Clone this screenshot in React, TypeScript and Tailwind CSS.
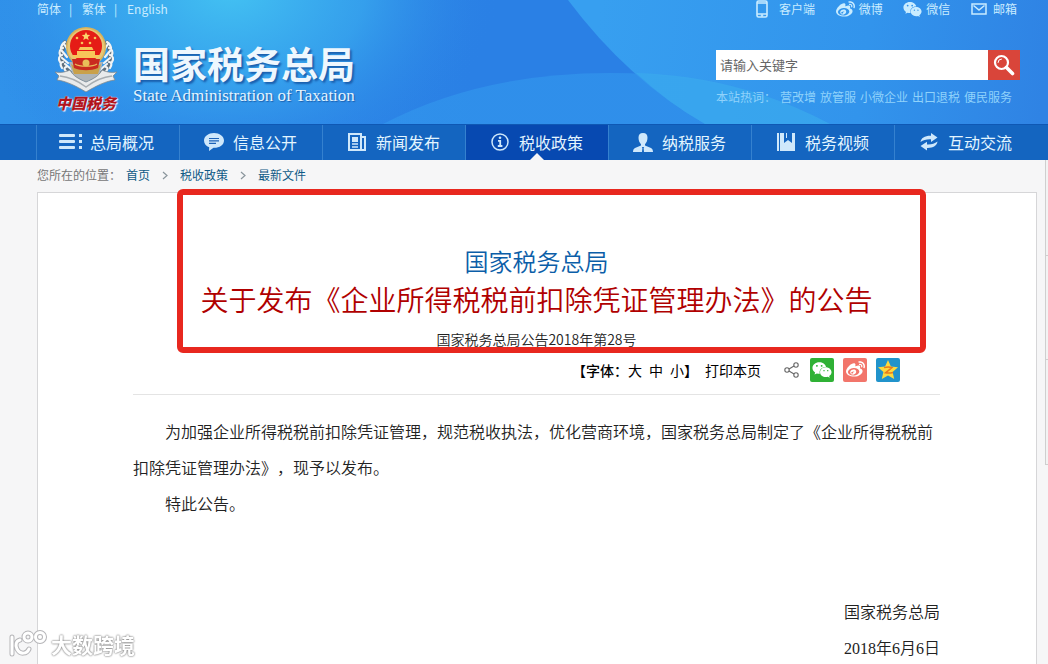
import { Fragment, type ReactNode } from 'react'
import { FaWeibo, FaWeixin } from 'react-icons/fa'

interface NavItem {
  label: string
  icon: ReactNode
  active?: boolean
}

const MenuIcon = () => (
  <svg width="24" height="18" viewBox="0 0 24 18" fill="currentColor">
    <rect x="0" y="1" width="16" height="3" rx="1" />
    <rect x="0" y="7" width="16" height="3" rx="1" />
    <rect x="0" y="13" width="16" height="3" rx="1" />
    <rect x="20" y="1" width="3" height="3" />
    <rect x="20" y="7" width="3" height="3" />
    <rect x="20" y="13" width="3" height="3" />
  </svg>
)

const ChatIcon = () => (
  <svg width="20" height="18" viewBox="0 0 20 18">
    <path d="M10 0C4.500 0 0 3.200 0 7.500c0 3.200 2.200 5.600 5.200 6.700L5 18l4.500-3.200C15.500 15 20 12 20 7.500 20 3.200 15.500 0 10 0z" fill="currentColor" />
    <path d="M5 5.500h10M5 7.900h10M5 10.300h7" stroke="#1c62b8" strokeWidth="1.200" />
  </svg>
)

const NewsIcon = () => (
  <svg width="20" height="18" viewBox="0 0 20 18" fill="none" stroke="currentColor" strokeWidth="2">
    <path d="M2 1h12v16H2zM14 4h4v13h-6" />
    <rect x="5" y="4" width="6" height="5" fill="currentColor" stroke="none" />
    <path d="M5 11h6M5 14h6" strokeWidth="1.500" />
  </svg>
)

const InfoIcon = () => (
  <svg width="18" height="18" viewBox="0 0 18 18" fill="none" stroke="currentColor" strokeWidth="1.500">
    <circle cx="9" cy="9" r="8" />
    <circle cx="9" cy="4.800" r="1.300" fill="currentColor" stroke="none" />
    <path d="M7 7.800h2.200v5M6.800 13h4.600" strokeWidth="1.800" />
  </svg>
)

const PersonIcon = () => (
  <svg width="20" height="19" viewBox="0 0 20 19" fill="currentColor">
    <path d="M10 0C6.800 0 5.500 2 5.500 4.800c0 3 1.200 5.200 2.500 6.400v1.300L2 15C.6 15.700 0 17 0 19h9l.4-4-.6-1h2.400l-.6 1 .4 4h9c0-2-.6-3.300-2-4l-6-2.500v-1.300c1.300-1.200 2.500-3.400 2.500-6.400C14.500 2 13.200 0 10 0z" />
  </svg>
)

const BookIcon = () => (
  <svg width="18" height="18" viewBox="0 0 18 18" fill="currentColor">
    <path d="M0 0h2v18H0zM3 0h4v10l4-3 4 3V0h3v18H3z" />
    <path d="M9 0h1v5H9z" />
  </svg>
)

const ExchangeIcon = () => (
  <svg width="18" height="18" viewBox="0 0 18 18" fill="currentColor">
    <path d="M11 0l6.500 4.500L11 9V6.200C6.500 6 3.500 6.800.5 9 1 4.800 5 2.500 11 2.700z" />
    <path d="M7 17.500L.5 13 7 8.800v2.600c4.500.2 7.500-.6 10.500-2.800-.5 4.200-4.500 6.500-10.500 6.300z" />
  </svg>
)

const navItems: NavItem[] = [
  { label: '总局概况', icon: <MenuIcon /> },
  { label: '信息公开', icon: <ChatIcon /> },
  { label: '新闻发布', icon: <NewsIcon /> },
  { label: '税收政策', icon: <InfoIcon />, active: true },
  { label: '纳税服务', icon: <PersonIcon /> },
  { label: '税务视频', icon: <BookIcon /> },
  { label: '互动交流', icon: <ExchangeIcon /> },
]

const hotWords = ['营改增', '放管服', '小微企业', '出口退税', '便民服务']

const crumbs = ['首页', '税收政策', '最新文件']

const HeaderBackground = () => (
  <svg className="absolute inset-0 h-full w-full" viewBox="0 0 1048 124" preserveAspectRatio="none" aria-hidden="true">
    <defs>
      <radialGradient id="glow" gradientUnits="userSpaceOnUse" cx="0" cy="0" r="1" gradientTransform="translate(230 -10) scale(270 190)">
        <stop offset="0" stopColor="#43c2f2" />
        <stop offset="0.5" stopColor="#38a8ee" stopOpacity="0.750" />
        <stop offset="1" stopColor="#2a80e5" stopOpacity="0" />
      </radialGradient>
      <linearGradient id="base" x1="0" x2="1" y1="0" y2="0">
        <stop offset="0" stopColor="#3092ea" />
        <stop offset="0.45" stopColor="#2a80e5" />
        <stop offset="1" stopColor="#2a80e5" />
      </linearGradient>
      <linearGradient id="right" gradientUnits="userSpaceOnUse" x1="600" x2="1048" y1="0" y2="60">
        <stop offset="0" stopColor="#379ff0" />
        <stop offset="0.6" stopColor="#3294ec" />
        <stop offset="1" stopColor="#2f83e4" />
      </linearGradient>
      <linearGradient id="hill" gradientUnits="userSpaceOnUse" x1="383" x2="830" y1="0" y2="0">
        <stop offset="0" stopColor="#3399ee" stopOpacity="0.600" />
        <stop offset="0.7" stopColor="#3399ee" stopOpacity="0.600" />
        <stop offset="1" stopColor="#3399ee" stopOpacity="0.300" />
      </linearGradient>
    </defs>
    <rect width="1048" height="124" fill="url(#base)" />
    <rect width="1048" height="124" fill="url(#glow)" />
    <path d="M568 0Q628 80 705 124H1048V0z" fill="url(#right)" />
    <path d="M383 124Q480 73 610 73Q730 73 830 124z" fill="url(#hill)" />
    <path d="M636 73Q740 76 830 124H705Q668 103 636 73z" fill="#3fb4ee" fillOpacity="0.450" />
  </svg>
)

const Emblem = () => (
  <svg width="62" height="66" viewBox="0 0 62 66" role="img" aria-label="税徽">
    <g fill="none" stroke="#5f6f7c" strokeWidth="5" strokeLinecap="round">
      <path d="M10 17C3 28 5 42 22 53M52 17c7 11 5 25-12 36" />
    </g>
    <g fill="none" stroke="#f1f3f4" strokeWidth="2.200" strokeLinecap="round">
      <path d="M10 16c-3 2-4 4-4 7M8 22c-3 1-4 4-3 7M7 29c-3 1-4 4-2 7M8 36c-3 0-3 3-1 6M11 41c-3 1-1 4 2 6M9 18l4 6M7 25l5 6M7 32l6 5M10 38l6 5M16 43l7 6" />
      <path d="M52 16c3 2 4 4 4 7M54 22c3 1 4 4 3 7M55 29c3 1 4 4 2 7M54 36c3 0 3 3 1 6M51 41c3 1 1 4-2 6M53 18l-4 6M55 25l-5 6M55 32l-6 5M52 38l-6 5M46 43l-7 6" />
    </g>
    <path d="M14 36h34l-4 14-13 6-13-6z" fill="#aeb4b7" />
    <path d="M16 38c8 6 22 6 30 0l-3 10H19z" fill="#c9a14a" />
    <circle cx="31" cy="21" r="20" fill="#d8b25a" />
    <circle cx="31" cy="21" r="18.500" fill="#e7c674" />
    <circle cx="31" cy="20" r="16" fill="#e51c16" />
    <path d="M31 6l1.200 2.800 3 .2-2.300 2 .8 3-2.700-1.600-2.700 1.600.8-3-2.300-2 3-.2z" fill="#fbd56b" />
    <g fill="#f8c65a">
      <circle cx="22" cy="12" r="1.300" />
      <circle cx="40" cy="12" r="1.300" />
      <circle cx="27" cy="17" r="1.300" />
      <circle cx="35" cy="17" r="1.300" />
      <path d="M25 21h12l1.500 3h-15zM22 25h18v4H22zM17 29h28l-2 3H19z" />
    </g>
    <path d="M17 33h28l-2 9c-7 3-17 3-24 0z" fill="#c92a20" />
    <circle cx="31" cy="37" r="3.500" fill="#e9bd59" />
    <path d="M20 38c4 3 18 3 22 0" fill="none" stroke="#e9bd59" strokeWidth="1.200" />
    <path d="M0 46c6 1 11 0 15-2 3 6 9 9 16 12 7-3 13-6 16-12 4 2 9 3 15 2l-4 4 2 4c-9 1-19 6-29 12C21 60 11 55 2 54l2-4z" fill="#e9ebec" stroke="#7c868d" strokeWidth="0.800" />
    <path d="M5 50c10 1 18 5 26 11 8-6 16-10 26-11" fill="none" stroke="#a7adb1" strokeWidth="1.500" />
  </svg>
)

const SearchIcon = () => (
  <svg width="22" height="22" viewBox="0 0 22 22" fill="none" stroke="#fff" strokeLinecap="round">
    <circle cx="8.500" cy="8.500" r="6.500" strokeWidth="2.200" />
    <path d="M13.500 13.500l6 6" strokeWidth="3.600" />
    <path d="M5 8.500a3.500 3.500 0 013.500-3.500" strokeWidth="1" />
  </svg>
)

const PhoneIcon = () => (
  <svg width="12" height="18" viewBox="0 0 12 18" fill="none" stroke="currentColor" strokeWidth="1.600">
    <rect x="1" y="1" width="10" height="16" rx="1.500" />
    <path d="M1 3h10M1 14h10" />
    <circle cx="6" cy="15.500" r="0.500" />
  </svg>
)

const MailIcon = () => (
  <svg width="16" height="12" viewBox="0 0 16 12" fill="none" stroke="currentColor" strokeWidth="1.500">
    <rect x="1" y="1" width="14" height="10" />
    <path d="M2.500 2.500L8 7l5.500-4.500" />
  </svg>
)

const ShareIcon = () => (
  <svg width="15" height="16" viewBox="0 0 15 16" fill="none" stroke="#666" strokeWidth="1.100">
    <circle cx="3" cy="8" r="2.200" />
    <circle cx="12" cy="3" r="2.200" />
    <circle cx="12" cy="13" r="2.200" />
    <path d="M5 7l5-3M5 9l5 3" />
  </svg>
)

const QzoneIcon = () => (
  <svg width="22" height="22" viewBox="0 0 22 22">
    <path d="M11 1l2.900 6.600 7.100.7-5.400 4.700 1.600 7L11 16.400 4.800 20l1.600-7L1 8.300l7.100-.7z" fill="#fdd93c" />
    <path d="M7 8.600c3-.8 6-.7 8 0l-6.500 5.200c2.600.5 5 .4 7.500-.3" fill="none" stroke="#e8791d" strokeWidth="1.500" />
  </svg>
)

const CrumbArrow = () => (
  <svg width="6" height="9" viewBox="0 0 6 9" fill="none" stroke="#8a959c" strokeWidth="1.200" aria-hidden="true">
    <path d="M1 1l4 3.500L1 8" />
  </svg>
)

function Header() {
  return (
    <header className="relative h-[124px] bg-[#2a80e5] pr-[28px] pl-[37px] text-[#c9ecff]">
      <HeaderBackground />
      <div className="relative flex h-full items-start justify-between">
        <div>
          <div className="flex h-[18px] items-center gap-2 text-xs leading-[18px]">
            <a href="#jt">简体</a>
            <span className="w-[5px]">|</span>
            <a href="#ft">繁体</a>
            <span className="w-[5px]">|</span>
            <a href="#en">English</a>
          </div>
          <a href="#home" className="mt-2 flex pl-[17px]">
            <span className="flex w-16 flex-col items-center">
              <Emblem />
              <span className="text-[15px] leading-[22px] font-black whitespace-nowrap text-[#b3141c] italic [text-shadow:0_0_1px_#fff,1px_1px_1px_#fff]">中国税务</span>
            </span>
            <span className="flex flex-col pt-4 pl-[15px]">
              <span className="text-[37px] leading-[42px] font-bold text-[#eef7fe] [text-shadow:2px_2px_2px_#1a5fae]">国家税务总局</span>
              <span className="font-['Liberation_Serif',serif] text-[17px] leading-6 whitespace-nowrap text-[#e4f4ff] [text-shadow:1px_1px_1px_#1a5fae]">
                State Administration of Taxation
              </span>
            </span>
          </a>
        </div>
        <div className="flex w-[304px] flex-col">
          <div className="flex h-[18px] items-center justify-between pr-[3px] pl-[40px] text-xs leading-[18px]">
            <a href="#app" className="flex items-center gap-[11px]"><PhoneIcon />客户端</a>
            <a href="#weibo" className="flex items-center gap-1"><FaWeibo size={19} />微博</a>
            <a href="#weixin" className="flex items-center gap-1"><FaWeixin size={19} />微信</a>
            <a href="#mail" className="flex items-center gap-[6px]"><MailIcon />邮箱</a>
          </div>
          <form className="mt-[32px] flex h-[30px]" onSubmit={(e) => e.preventDefault()}>
            <input
              type="text"
              aria-label="搜索"
              placeholder="请输入关键字"
              className="min-w-0 flex-1 bg-white px-1 text-[13px] text-[#555] outline-none placeholder:text-[#666]"
            />
            <button type="submit" aria-label="搜索" className="flex w-8 items-center justify-center bg-[#d9453a]">
              <SearchIcon />
            </button>
          </form>
          <div className="mt-2 flex gap-1 text-xs leading-[18px] whitespace-nowrap text-[#8fd2fb]">
            <span>本站热词：</span>
            {hotWords.map((word) => (
              <a key={word} href="#search">{word}</a>
            ))}
          </div>
        </div>
      </div>
    </header>
  )
}

function Nav() {
  return (
    <nav className="flex h-9 border-t border-[#0f58b4] bg-[#1465c0] pr-[11px] pl-9">
      {navItems.map((item) => (
        <a
          key={item.label}
          href="#nav"
          className={`relative flex flex-1 items-center border-l border-[#3581cf] pb-px pl-5 text-base text-[#e3f5ff] ${item.active ? 'bg-[#0749b1]' : ''}`}
        >
          <span className="flex w-7 justify-center text-[#cfe8fb]">{item.icon}</span>
          <span className="pl-[5px]">{item.label}</span>
          {item.active && (
            <svg className="absolute bottom-0 left-1/2 -translate-x-1/2" width="14" height="7" viewBox="0 0 14 7">
              <path d="M7 0l7 7H0z" fill="#f6f6f7" />
            </svg>
          )}
        </a>
      ))}
    </nav>
  )
}

function Toolbar() {
  return (
    <div className="flex h-[38px] items-center justify-end border-b border-[#e4e4e4] pr-10 pb-3 text-sm text-black">
      <div className="flex items-center">
        <span className="font-medium">【字体：</span>
        <div className="flex gap-[7px]">
          <button type="button">大</button>
          <button type="button">中</button>
          <button type="button">小</button>
        </div>
        <span className="font-medium">】</span>
      </div>
      <button type="button" className="ml-[7px]">打印本页</button>
      <div className="ml-[23px] flex items-center gap-[9px]">
        <button type="button" aria-label="分享" className="mr-[2px]"><ShareIcon /></button>
        <button type="button" aria-label="微信" className="flex size-6 items-center justify-center rounded-xs bg-[#2fb135] text-white"><FaWeixin size={20} /></button>
        <button type="button" aria-label="微博" className="flex size-6 items-center justify-center rounded-xs bg-[#f2756b] text-white"><FaWeibo size={19} /></button>
        <button type="button" aria-label="QQ空间" className="flex size-6 items-center justify-center rounded-xs bg-[#2193cb]"><QzoneIcon /></button>
      </div>
    </div>
  )
}

function Article() {
  return (
    <article className="relative mr-[11px] ml-[37px] flex-1 border border-b-0 border-[#d6d6d8] bg-white pt-12 pr-24 pl-[95px]">
      <h1 className="text-center font-[350]">
        <span className="block text-2xl leading-10 text-[#0b5ea8]">国家税务总局</span>
        <span className="block text-[28px] leading-9 text-[#b00000]">关于发布《企业所得税税前扣除凭证管理办法》的公告</span>
      </h1>
      <p className="pt-[10px] text-center text-sm leading-6 font-[350] text-[#222]">国家税务总局公告2018年第28号</p>
      <div className="pt-[6px]">
        <Toolbar />
      </div>
      <div className="pt-[18px] text-base leading-9 font-[350] text-[#222]">
        <p className="indent-8">
          为加强企业所得税税前扣除凭证管理，规范税收执法，优化营商环境，国家税务总局制定了《企业所得税税前扣除凭证管理办法》，现予以发布。
        </p>
        <p className="indent-8">特此公告。</p>
        <div className="pt-[72px] text-right">
          <p>国家税务总局</p>
          <p className="font-['Liberation_Serif','Noto_Sans_CJK_SC',serif] leading-10">2018年6月6日</p>
        </div>
      </div>
      {/* highlight frame over the title block */}
      <div className="pointer-events-none absolute -top-1 right-[110px] left-[139px] h-[164px] rounded-md border-6 border-[#e8281f]" />
    </article>
  )
}

export default function App() {
  return (
    <div className="relative flex min-h-screen flex-col bg-[#f6f6f7] font-['Noto_Sans_CJK_SC',sans-serif] [text-spacing-trim:space-all]">
      <Header />
      <Nav />
      <div className="relative flex flex-1 flex-col">
        <div className="flex h-8 items-center pb-[2px] pl-[37px] text-xs text-[#0f5a86]">
          <span className="pr-[5px] text-[#777]">您所在的位置：</span>
          {crumbs.map((crumb, i) => (
            <Fragment key={crumb}>
              {i > 0 && <span className="flex w-[30px] justify-center"><CrumbArrow /></span>}
              <a href="#crumb">{crumb}</a>
            </Fragment>
          ))}
        </div>
        <Article />
        {/* docked side panel, only its edge is on screen */}
        <aside className="absolute top-0 right-0 flex w-[3px] flex-col border-b border-l border-[#cfcfcf] bg-[#f3f3f3]">
          <div className="h-24 border-b border-[#cfcfcf]" />
          <div className="h-26 border-b border-[#cfcfcf]" />
          <div className="h-26" />
        </aside>
      </div>
      <div className="fixed bottom-[6px] left-2 flex items-center gap-[3px] text-white">
        <svg width="40" height="28" viewBox="0 0 40 28" fill="none" strokeLinecap="round" aria-hidden="true">
          <g stroke="#b5b5b8" strokeWidth="5">
            <path d="M4 7v17M12 10c-4 1-5 5-3 9 3 6 10 5 12 0" />
            <circle cx="20" cy="7" r="4" />
            <circle cx="32" cy="7" r="4.500" />
          </g>
          <g stroke="#fff" strokeWidth="3">
            <path d="M4 7v17M12 10c-4 1-5 5-3 9 3 6 10 5 12 0" />
            <circle cx="20" cy="7" r="4" />
            <circle cx="32" cy="7" r="4.500" />
          </g>
        </svg>
        <span className="text-[21px] leading-7 font-bold [text-shadow:0_0_2px_#888,0_0_2px_#888]">大数跨境</span>
      </div>
    </div>
  )
}
